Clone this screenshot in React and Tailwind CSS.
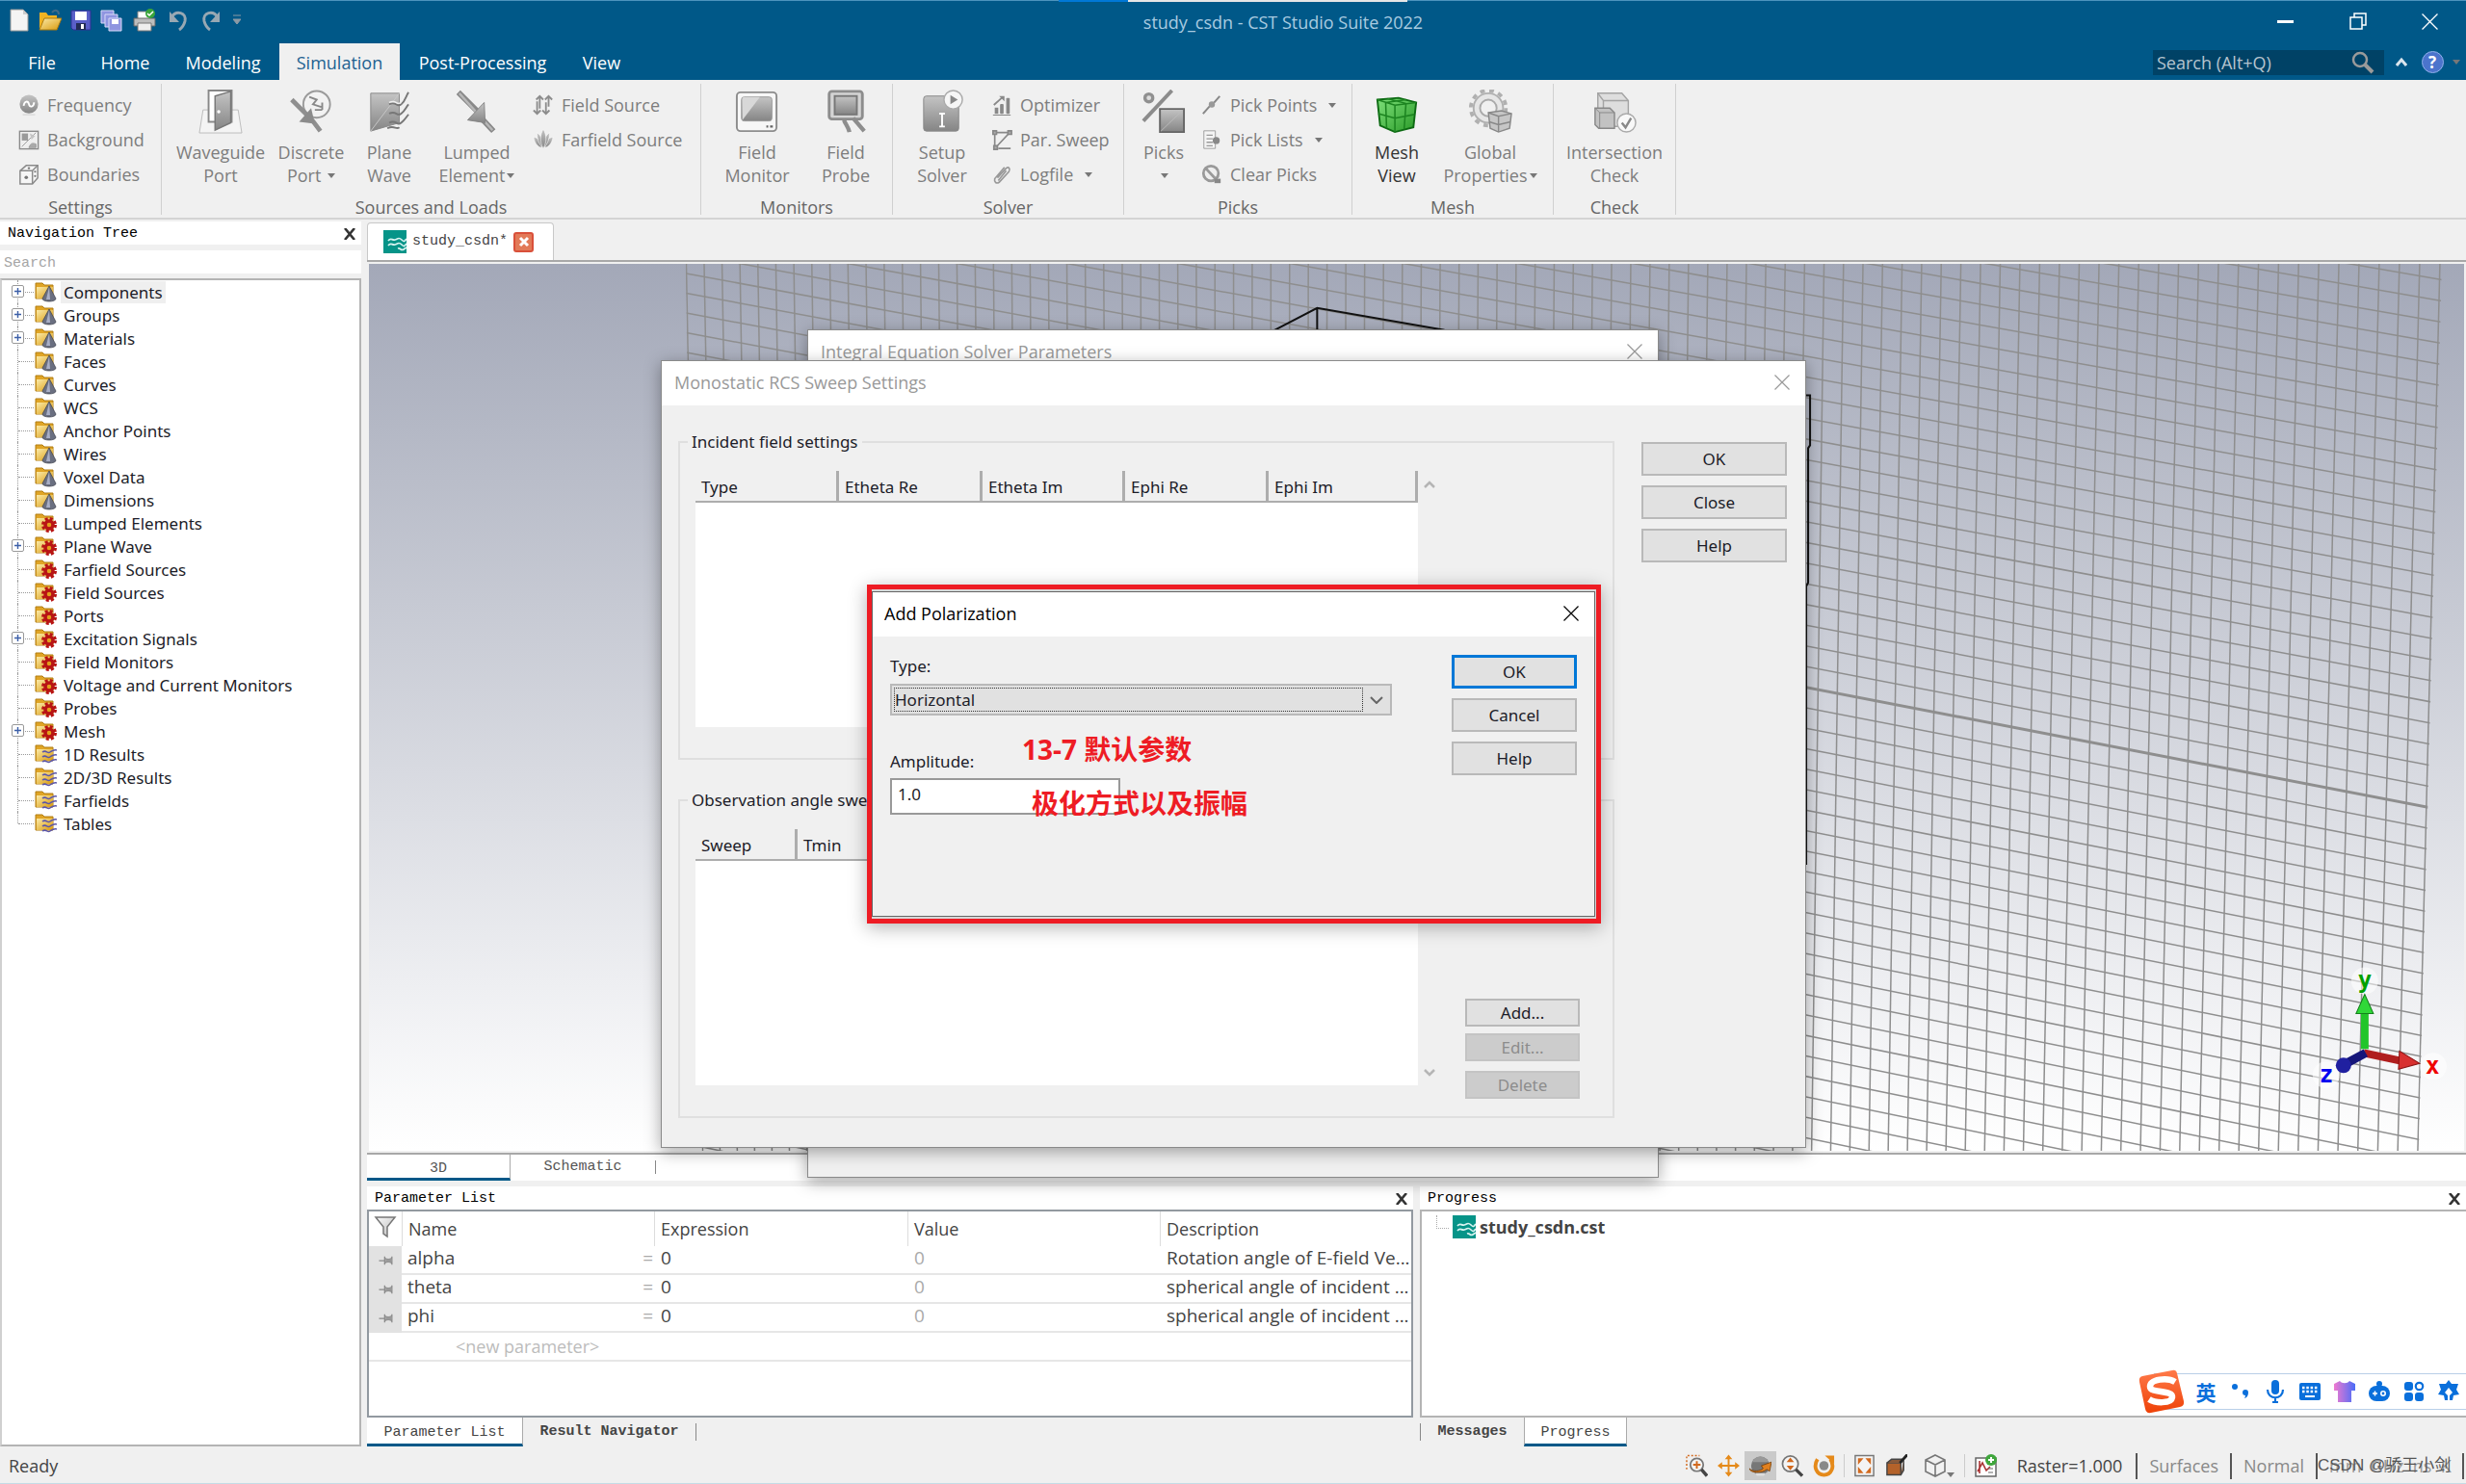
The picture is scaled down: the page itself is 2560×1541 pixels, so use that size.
import React from 'react'

const treeItems = [
  { name: 'Components', kind: 'cone', open: true, selected: true },
  { name: 'Groups', kind: 'cone', open: true },
  { name: 'Materials', kind: 'cone', open: true },
  { name: 'Faces', kind: 'cone' },
  { name: 'Curves', kind: 'cone' },
  { name: 'WCS', kind: 'cone' },
  { name: 'Anchor Points', kind: 'cone' },
  { name: 'Wires', kind: 'cone' },
  { name: 'Voxel Data', kind: 'cone' },
  { name: 'Dimensions', kind: 'cone' },
  { name: 'Lumped Elements', kind: 'gear' },
  { name: 'Plane Wave', kind: 'gear', open: true },
  { name: 'Farfield Sources', kind: 'gear' },
  { name: 'Field Sources', kind: 'gear' },
  { name: 'Ports', kind: 'gear' },
  { name: 'Excitation Signals', kind: 'gear', open: true },
  { name: 'Field Monitors', kind: 'gear' },
  { name: 'Voltage and Current Monitors', kind: 'gear' },
  { name: 'Probes', kind: 'gear' },
  { name: 'Mesh', kind: 'gear', open: true },
  { name: '1D Results', kind: 'wave' },
  { name: '2D/3D Results', kind: 'wave' },
  { name: 'Farfields', kind: 'wave' },
  { name: 'Tables', kind: 'wave' },
]

const params = [
  { name: 'alpha', expression: '0', value: '0', description: 'Rotation angle of E-field Ve...' },
  { name: 'theta', expression: '0', value: '0', description: 'spherical angle of incident ...' },
  { name: 'phi', expression: '0', value: '0', description: 'spherical angle of incident ...' },
]

/* shared gradients for the icons */
const Gradients = () => (
  <svg className="absolute w-0 h-0" aria-hidden="true">
    <defs>
      <linearGradient id="gray" x1="0" y1="0" x2="0" y2="1">
        <stop offset="0" stopColor="#c4c4c4" /><stop offset="1" stopColor="#858585" />
      </linearGradient>
      <linearGradient id="light" x1="0" y1="0" x2="1" y2="1">
        <stop offset="0" stopColor="#fafafa" /><stop offset="1" stopColor="#bcbcbc" />
      </linearGradient>
      <linearGradient id="folder" x1="0" y1="0" x2="1" y2="1">
        <stop offset="0" stopColor="#fbeaa8" /><stop offset="1" stopColor="#d99a0c" />
      </linearGradient>
      <linearGradient id="green" x1="0" y1="0" x2="1" y2="1">
        <stop offset="0" stopColor="#7ee07a" /><stop offset="1" stopColor="#2a9a28" />
      </linearGradient>
      <linearGradient id="sogou" x1="0" y1="0" x2="0" y2="1">
        <stop offset="0" stopColor="#ff7a4a" /><stop offset="1" stopColor="#ee4208" />
      </linearGradient>
      <linearGradient id="shirt" x1="0" y1="0" x2="1" y2="0">
        <stop offset="0" stopColor="#f07ad0" /><stop offset="1" stopColor="#4a6cf7" />
      </linearGradient>
    </defs>
  </svg>
)

const Caret = ({ className = '' }) => (
  <svg className={`inline-block w-2 h-[5px] ${className}`} viewBox="0 0 8 5"><path d="M0 0h8L4 5z" fill="#777" /></svg>
)

const WaveLogo = () => (
  <svg className="w-6 h-6 shrink-0" viewBox="0 0 24 24">
    <rect width="24" height="24" fill="#069488" />
    <path d="M5 11c3-4 4 0 7-1s4-3 7 0 3 1 5-1M5 16c3-4 4 0 7-1s4-3 7 0 3 1 5-1M15 19c3-1 3 3 6 1l3-2" fill="none" stroke="#d8f3f0" strokeWidth="1.700" />
  </svg>
)

const CloseX = ({ className = 'w-4 h-4' }) => (
  <svg className={className} viewBox="0 0 16 16"><path d="M.5.5l15 15M15.5.5l-15 15" stroke="currentColor" strokeWidth="1.200" fill="none" /></svg>
)

const PanelClose = () => (
  <button aria-label="Close panel" className="w-6 h-6 flex items-center justify-center text-[#333]">
    <svg className="w-3 h-3" viewBox="0 0 12 12"><path d="M1 0l10 12M11 0L1 12" stroke="currentColor" strokeWidth="2.600" /></svg>
  </button>
)

/* small 24px icons */
const smallIcons = {
  frequency: (
    <>
      <circle cx="12" cy="11" r="10.500" fill="url(#gray)" /><path d="M6 13c1-6 5-6 6-2s5 4 6-2" fill="none" stroke="#fff" strokeWidth="2" />
      <path d="M5 23h14" stroke="#ccc" />
    </>
  ),
  background: (
    <>
      <rect x="1.500" y="2.500" width="21" height="20" fill="#eee" stroke="#8a8a8a" strokeWidth="1.500" />
      <path d="M4 5h7v8H4z" fill="#9a9a9a" /><path d="M20 4L4 20M12 21c2-6 5-5 8-4v4z" stroke="#999" fill="#aaa" /><path d="M13 5l6 3-4 4z" fill="#c4c4c4" />
    </>
  ),
  boundaries: (
    <>
      <path d="M2 8l7-6h13v14l-6 7H2z" fill="#f6f6f6" stroke="#8a8a8a" strokeWidth="1.600" /><path d="M2 8h14v15M16 8l6-6" fill="none" stroke="#8a8a8a" strokeWidth="1.600" />
      <circle cx="9" cy="15.500" r="2" fill="#777" /><circle cx="12" cy="5" r="1.300" fill="#777" /><circle cx="19" cy="9" r="1.200" fill="#777" /><circle cx="19" cy="14" r="1.200" fill="#777" />
    </>
  ),
  fieldSource: (
    <g fill="none" stroke="#8c8c8c" strokeWidth="2">
      <path d="M8 16V2M4 6l4-4 4 4M18 14V2M14 6l4-4 4 4M5 8v14M1 18l4 4 4-4M15 9v13M11 18l4 4 4-4" />
    </g>
  ),
  farfield: (
    <g fill="url(#gray)" stroke="#fff" strokeWidth=".6">
      <path d="M1 9c6 1 9 6 9 12C5 20 2 15 1 9zM23 9c-6 1-9 6-9 12 5-1 8-6 9-12z" /><path d="M5 4c5 4 7 10 6 17-4-4-6-10-6-17zM19 4c-5 4-7 10-6 17 4-4 6-10 6-17z" /><path d="M12 0c4 7 4 15 0 22C8 15 8 7 12 0z" />
    </g>
  ),
  optimizer: (
    <g fill="#888">
      <rect x="4" y="15" width="4" height="7" /><rect x="10" y="11" width="4" height="11" rx="1" /><rect x="17" y="4" width="4" height="18" rx="1" /><path d="M3 12l9-8" stroke="#888" strokeWidth="2" /><path d="M9 2h6v6zM2 23h20v1H2z" />
    </g>
  ),
  sweep: (
    <g fill="none" stroke="#888" strokeWidth="1.800">
      <path d="M4 22V4h17L5 21M8 22h14" /><path d="M2 2h4v4H2zM19 2h4v4h-4zM3 19h4v4H3z" fill="#aaa" />
    </g>
  ),
  logfile: (
    <path d="M7 16L17 5c3-2 5 1 3 4L9 21c-3 2-6 0-5-4L15 4M8 19l9-11" fill="none" stroke="#999" strokeWidth="1.800" />
  ),
  pickPoints: (
    <>
      <path d="M2 22l8-9M14 10l7-8" stroke="#888" strokeWidth="2.200" /><circle cx="12" cy="11.500" r="3.500" fill="#999" />
    </>
  ),
  pickLists: (
    <>
      <path d="M3 2h13v20H3z" fill="#f4f4f4" stroke="#9a9a9a" /><path d="M6 7h7M6 11h7M6 15h7M6 19h7" stroke="#999" strokeWidth="1.500" /><circle cx="17" cy="13" r="4" fill="#888" />
    </>
  ),
  clearPicks: (
    <>
      <circle cx="11" cy="11" r="8.500" fill="#eee" stroke="#999" strokeWidth="3" /><path d="M5 5l12 13" stroke="#999" strokeWidth="3" /><path d="M15 17h7v5h-7z" fill="#888" />
    </>
  ),
}

const SmallButton = ({ icon, children, caret }) => (
  <button className="h-9 flex items-center gap-2 text-[#7d7d7d]">
    <svg className="w-[22px] h-6 shrink-0" viewBox="0 0 24 24">{smallIcons[icon]}</svg>
    <span>{children}</span>
    {caret && <Caret className="ml-1" />}
  </button>
)

/* large 48px ribbon icons */
const bigIcons = {
  waveguide: (
    <>
      <path d="M5 22h38l4 25H1z" fill="#f4f4f4" stroke="#bbb" /><path d="M11 1h25v34H11z" fill="#fff" stroke="#888" strokeWidth="2" />
      <path d="M18 7l17-5v34l-17 8z" fill="url(#gray)" stroke="#777" strokeWidth="1.500" /><circle cx="22" cy="24" r="1.800" fill="#fff" />
    </>
  ),
  discrete: (
    <>
      <circle cx="30" cy="16" r="14.500" fill="#f2f2f2" stroke="#9a9a9a" strokeWidth="2" /><path d="M22 8l8 3-4 5 9 3M36 22h-8M36 22v-8" fill="none" stroke="#888" strokeWidth="2" />
      <path d="M3 11l22 22M25 33l9 12" stroke="#8f8f8f" strokeWidth="5" /><path d="M24 20L11 35l17 2z" fill="#8b8b8b" />
    </>
  ),
  plane: (
    <>
      <path d="M4 4h31v32L4 45z" fill="url(#gray)" stroke="#888" /><path d="M4 45L35 4" stroke="#c8c8c8" />
      <path d="M24 16c8-4 8 4 13 0s5-9 8-13M24 26c8-4 8 4 13 0s5-7 8-10M24 36c8-4 8 4 13 0s5-6 8-9M22 42c8-4 9 2 13-1" fill="none" stroke="#777" strokeWidth="2" /><path d="M24 14c8-4 8 4 13 0" stroke="#eee" strokeWidth="1.500" fill="none" />
    </>
  ),
  lumped: (
    <>
      <path d="M4 3l24 24M28 30l14 15" stroke="#888" strokeWidth="6" /><path d="M5 4l36 40" stroke="#b8b8b8" strokeWidth="2.500" /><path d="M32 14L14 33l19 3z" fill="url(#gray)" stroke="#858585" />
    </>
  ),
  monitor: (
    <>
      <rect x="2" y="3" width="43" height="42" rx="4" fill="#f7f7f7" stroke="#8d8d8d" strokeWidth="2" /><rect x="7" y="8" width="33" height="26" rx="3" fill="url(#gray)" stroke="#999" />
      <path d="M8 33L27 8H10q-2 0-2 3z" fill="#d8d8d8" /><path d="M34 40h2M38 40h3" stroke="#666" strokeWidth="2.500" />
    </>
  ),
  probe: (
    <>
      <rect x="6" y="2" width="36" height="30" rx="3" fill="#d4d4d4" stroke="#8d8d8d" strokeWidth="3" /><rect x="12" y="7" width="24" height="20" fill="url(#gray)" stroke="#777" strokeWidth="2" />
      <path d="M22 33c2 5 5 8 6 13M32 31l12 14" stroke="#8d8d8d" strokeWidth="4.500" fill="none" />
    </>
  ),
  setup: (
    <>
      <rect x="4" y="7" width="38" height="38" rx="3" fill="url(#gray)" stroke="#888" /><path d="M24 26v14M21 26h6M21 40h6" stroke="#fff" strokeWidth="2" />
      <circle cx="36" cy="11" r="10" fill="#f6f6f6" stroke="#aaa" strokeWidth="1.500" /><path d="M33 6l8 5-8 5z" fill="#888" />
    </>
  ),
  picks: (
    <>
      <circle cx="8" cy="9" r="6" fill="#909090" /><circle cx="8" cy="9" r="2.500" fill="#ddd" /><path d="M33 1L2 34" stroke="#8c8c8c" strokeWidth="4" /><path d="M20 21h26v25H20z" fill="url(#gray)" stroke="#666" strokeWidth="2" /><path d="M21 45L45 22" stroke="#bbb" />
    </>
  ),
  mesh: (
    <>
      <path d="M3 11l23-2 19 5-3 27-20 5-16-7z" fill="url(#green)" stroke="#0c6a12" strokeWidth="2" /><path d="M3 11l19 6 23-3M22 17v29M12 14l1 28M34 15l-2 28M4 26l18 5 21-4M14 10l20 5M34 11L12 14" fill="none" stroke="#1c8420" strokeWidth="1.600" />
    </>
  ),
  global: (
    <>
      <circle cx="22" cy="20" r="16" fill="#e6e6e6" stroke="#b0b0b0" strokeWidth="2" /><circle cx="22" cy="20" r="19" fill="none" stroke="#b0b0b0" strokeWidth="4" strokeDasharray="5 5" /><circle cx="22" cy="20" r="9" fill="#f0f0f0" stroke="#aaa" strokeWidth="2" />
      <path d="M22 25l14-2 11 3-2 16-12 4-9-4z" fill="#c6c6c6" stroke="#888" strokeWidth="1.500" /><path d="M22 25l11 4 14-3M33 29v17M23 35l10 3 13-3" stroke="#888" fill="none" strokeWidth="1.500" />
    </>
  ),
  intersection: (
    <>
      <path d="M6 4h26l7 8v28H6z" fill="#dedede" stroke="#a4a4a4" strokeWidth="1.500" /><path d="M6 4l6 8h27M12 12v10" stroke="#a4a4a4" fill="none" strokeWidth="1.500" />
      <path d="M3 20h16l5 5v17H7l-4-4z" fill="#c2c2c2" stroke="#888" strokeWidth="1.500" /><path d="M3 20l5 5h16M8 25v17" stroke="#888" fill="none" /><circle cx="37" cy="36" r="10" fill="#f8f8f8" stroke="#aaa" strokeWidth="1.500" /><path d="M32 36l4 5 6-10" fill="none" stroke="#888" strokeWidth="2.500" />
    </>
  ),
}

const BigButton = ({ icon, lines, caret, className = '' }) => (
  <button className={`h-[108px] flex flex-col items-center pt-1 leading-6 ${className}`}>
    <svg className="w-[46px] h-[46px] mb-[7px] shrink-0" viewBox="0 0 48 48">{bigIcons[icon]}</svg>
    <span className="whitespace-nowrap">{lines[0]}</span>
    <span className="whitespace-nowrap">{lines[1]}{caret && <Caret className="ml-0.5 mb-1" />}</span>
  </button>
)

const Group = ({ title, className = '', children }) => (
  <div className={`shrink-0 h-[136px] mt-1 flex flex-col border-r border-[#d0d0d0] ${className}`}>
    <div className="flex h-[116px] shrink-0 pt-0.5">{children}</div>
    <div className="text-center leading-6 text-[#666]">{title}</div>
  </div>
)

const TitleBar = () => (
  <header className="h-[45px] shrink-0 flex bg-[#005888] border-t border-[#4c94be] text-[#a9cbe0]">
    <div className="w-[329px] h-10 flex items-center gap-2 pl-2">
      <svg className="w-6 h-6" viewBox="0 0 24 24"><path d="M3 1h13l5 5v17H3z" fill="#f4f4f4" stroke="#999" /><path d="M16 1v5h5" fill="#ccc" /></svg>
      <svg className="w-6 h-6" viewBox="0 0 24 24"><path d="M1 22V4h7l2 3h9v4" fill="#f0b323" /><path d="M1 22L6 10h18l-5 12z" fill="url(#folder)" stroke="#a97a10" /><path d="M14 4c3-4 7-2 7 2" fill="none" stroke="#3f6a8a" strokeWidth="2" /></svg>
      <svg className="w-6 h-6" viewBox="0 0 24 24"><path d="M2 2h20v20H4l-2-2z" fill="#5a5fc8" stroke="#2c3092" /><rect x="6" y="3" width="12" height="9" fill="#fff" /><rect x="7" y="15" width="10" height="7" fill="#222b55" /><rect x="12" y="16" width="3" height="5" fill="#fff" /></svg>
      <svg className="w-6 h-6" viewBox="0 0 24 24"><g fill="#8f95e0" stroke="#d8daf7"><path d="M1 2h13v13H1z" /><path d="M5 6h13v13H5z" /><path d="M9 10h13v13H9z" /></g><path d="M12 11h7v5h-7z" fill="#fff" /></svg>
      <svg className="w-6 h-6 ml-0.5" viewBox="0 0 24 24"><path d="M5 3h13v8H5z" fill="#fff" stroke="#888" /><path d="M1 10h22v8H1z" fill="#bdbdbd" stroke="#666" /><path d="M5 15h14v8H5z" fill="#eee" stroke="#777" /><circle cx="18" cy="5" r="5" fill="#3aa53a" /><path d="M15 5l2 2 4-4" stroke="#fff" strokeWidth="1.500" fill="none" /></svg>
      <svg className="w-6 h-6 ml-1" viewBox="0 0 24 24"><path d="M4 9C9 1 20 4 18 13c-1 4-3 7-6 9" fill="none" stroke="#98a8b3" strokeWidth="3" /><path d="M2 3v11h10z" fill="#98a8b3" /></svg>
      <svg className="w-6 h-6" viewBox="0 0 24 24"><path d="M20 9C15 1 4 4 6 13c1 4 3 7 6 9" fill="none" stroke="#98a8b3" strokeWidth="3" /><path d="M22 3v11H12z" fill="#98a8b3" /></svg>
      <svg className="w-2 h-3 ml-1" viewBox="0 0 8 12"><path d="M0 1h8M0 5h8L4 10z" stroke="#8c9aa5" fill="#8c9aa5" /></svg>
    </div>
    <h1 className="flex-1 text-center text-[18px] leading-[44px]">study_csdn - CST Studio Suite 2022</h1>
    <div className="h-[42px] flex text-white">
      <button aria-label="Minimize" className="w-[75px] flex items-center justify-center"><span className="w-[17px] h-[3px] bg-white" /></button>
      <button aria-label="Restore" className="w-[75px] flex items-center justify-center">
        <svg className="w-[18px] h-[18px]" viewBox="0 0 18 18" fill="none" stroke="#fff" strokeWidth="1.500"><path d="M1 5h12v12H1zM5 5V1h12v12h-4" /></svg>
      </button>
      <button aria-label="Close" className="w-[75px] flex items-center justify-center"><CloseX className="w-[17px] h-[17px]" /></button>
    </div>
  </header>
)

const MenuTabs = () => (
  <nav className="h-[38px] shrink-0 flex bg-[#005888] text-white text-[18px]">
    <button className="w-[87px] pt-0.5">File</button>
    <button className="w-[86px] pt-0.5">Home</button>
    <button className="w-[117px] pt-0.5">Modeling</button>
    <button className="w-[125px] pt-0.5 bg-[#f0f0f0] text-[#1d6291]">Simulation</button>
    <button className="w-[172px] pt-0.5">Post-Processing</button>
    <button className="w-[75px] pt-0.5">View</button>
    <div className="ml-auto mt-[7px] h-[26px] w-60 flex items-center bg-[#004266] pl-1 pr-2.5">
      <input aria-label="Search commands" placeholder="Search (Alt+Q)" className="flex-1 min-w-0 bg-transparent outline-none text-[18px] placeholder:text-[#b5c4cf]" />
      <svg className="w-6 h-6" viewBox="0 0 24 24"><circle cx="9" cy="9" r="7" fill="none" stroke="#9a9a9a" strokeWidth="2.500" /><path d="M14 14l8 8" stroke="#9a9a9a" strokeWidth="4" /></svg>
    </div>
    <button aria-label="Collapse ribbon" className="w-9 flex items-center justify-center">
      <svg className="w-3 h-3" viewBox="0 0 12 12"><path d="M1 10l5-6 5 6" fill="none" stroke="#dbe6ee" strokeWidth="3" /></svg>
    </button>
    <button aria-label="Help" className="w-7 flex items-center justify-center">
      <span className="w-[23px] h-[23px] rounded-full bg-[#4b74cc] border border-[#8fb0ea] font-bold leading-[21px] text-[17px]">?</span>
    </button>
    <span className="w-[21px] flex items-center justify-center"><Caret /></span>
  </nav>
)

const Ribbon = () => (
  <div className="h-[145px] shrink-0 flex border-b-2 border-[#d4d4d4] text-[18px] text-[#7d7d7d]">
    <Group title="Settings" className="w-[168px]">
      <div className="pl-[19px] pt-0.5">
        <SmallButton icon="frequency">Frequency</SmallButton>
        <SmallButton icon="background">Background</SmallButton>
        <SmallButton icon="boundaries">Boundaries</SmallButton>
      </div>
    </Group>
    <Group title="Sources and Loads" className="w-[560px]">
      <BigButton icon="waveguide" lines={['Waveguide', 'Port']} className="w-[110px] ml-1.5" />
      <BigButton icon="discrete" lines={['Discrete', 'Port ']} caret className="w-[78px]" />
      <BigButton icon="plane" lines={['Plane', 'Wave']} className="w-[84px]" />
      <BigButton icon="lumped" lines={['Lumped', 'Element']} caret className="w-[98px]" />
      <div className="pl-[9px] pt-0.5">
        <SmallButton icon="fieldSource">Field Source</SmallButton>
        <SmallButton icon="farfield">Farfield Source</SmallButton>
      </div>
    </Group>
    <Group title="Monitors" className="w-[199px]">
      <BigButton icon="monitor" lines={['Field', 'Monitor']} className="w-[92px] ml-3" />
      <BigButton icon="probe" lines={['Field', 'Probe']} className="w-[92px]" />
    </Group>
    <Group title="Solver" className="w-[240px]">
      <BigButton icon="setup" lines={['Setup', 'Solver']} className="w-[86px] ml-2" />
      <div className="pl-2 pt-0.5">
        <SmallButton icon="optimizer">Optimizer</SmallButton>
        <SmallButton icon="sweep">Par. Sweep</SmallButton>
        <SmallButton icon="logfile" caret>Logfile</SmallButton>
      </div>
    </Group>
    <Group title="Picks" className="w-[237px]">
      <BigButton icon="picks" lines={['Picks', '']} caret className="w-[76px] ml-[3px]" />
      <div className="pl-px pt-0.5">
        <SmallButton icon="pickPoints" caret>Pick Points</SmallButton>
        <SmallButton icon="pickLists" caret>Pick Lists</SmallButton>
        <SmallButton icon="clearPicks">Clear Picks</SmallButton>
      </div>
    </Group>
    <Group title="Mesh" className="w-[209px]">
      <BigButton icon="mesh" lines={['Mesh', 'View']} className="w-[80px] ml-1.5 text-[#333]" />
      <BigButton icon="global" lines={['Global', 'Properties']} caret className="w-[114px]" />
    </Group>
    <Group title="Check" className="w-[127px]">
      <BigButton icon="intersection" lines={['Intersection', 'Check']} className="w-full" />
    </Group>
  </div>
)

const FolderIcon = ({ kind }) => (
  <svg className="w-[23px] h-[22px] shrink-0" viewBox="0 0 23 22">
    <path d="M1 18V2h7l2 2h9v14z" fill="#e0a526" stroke="#b07c12" />
    <path d="M2 6h17v12H2z" fill="url(#folder)" />
    {kind === 'cone' && <path d="M15 5l-7 13c0 4 14 4 14 0z" fill="#6a6f80" stroke="#3c3f4a" strokeWidth=".7" />}
    {kind === 'cone' && <path d="M15 6l-3 13h4z" fill="#a9afc6" />}
    {kind === 'gear' && (
      <>
        <circle cx="15" cy="13" r="6.500" fill="none" stroke="#b81414" strokeWidth="3" strokeDasharray="3 2.100" /><circle cx="15" cy="13" r="4" fill="#e2a01c" stroke="#b81414" strokeWidth="3.500" />
      </>
    )}
    {kind === 'wave' && <path d="M8 9c4-3 5 2 8 0s4-3 7-2M8 14c4-3 5 2 8 0s4-3 7-2M8 19c4-3 5 2 8 0s4-3 7-2" fill="none" stroke="#5b56a8" strokeWidth="1.500" />}
  </svg>
)

const NavigationTree = () => (
  <aside className="w-[375px] mr-1.5 shrink-0 flex flex-col pt-0.5">
    <div className="h-6 pt-0.5 pl-2 flex items-center justify-between bg-white font-['Liberation_Mono',monospace] text-[15px] text-black">
      Navigation Tree
      <PanelClose />
    </div>
    <input aria-label="Search tree" placeholder="Search" className="mt-1.5 h-6 pt-0.5 pl-1 bg-white outline-none font-['Liberation_Mono',monospace] text-[15px] placeholder:text-[#a6a6a6]" />
    <ul className="mt-[5px] flex-1 bg-white border-2 border-[#b4b4b4] border-l-[#d0d0d0] font-['Noto_Sans',sans-serif] text-[17px] text-[#1c1c28]">
      {treeItems.map((item, i) => (
        <li key={item.name} className="h-6 flex items-center">
          <span className={`relative ml-4 w-[18px] shrink-0 border-l border-dotted border-[#999] ${i === treeItems.length - 1 ? 'h-3 self-start' : 'h-6'}`}>
            <span className={`absolute left-0 w-4 border-t border-dotted border-[#999] ${i === treeItems.length - 1 ? 'top-full' : 'top-1/2'}`} />
            {item.open && (
              <button aria-label={`Expand ${item.name}`} className="absolute -left-[7px] top-[5px] w-[13px] h-[13px] bg-white border border-[#999] rounded-[2px]">
                <svg className="w-[11px] h-[11px]" viewBox="0 0 11 11"><path d="M2 5.500h7M5.500 2v7" stroke="#3c5fa8" strokeWidth="1.400" /></svg>
              </button>
            )}
          </span>
          <FolderIcon kind={item.kind} />
          <span className={`ml-1 px-[3px] leading-[23px] ${item.selected ? 'bg-[#efefef]' : ''}`}>{item.name}</span>
        </li>
      ))}
    </ul>
  </aside>
)

const Viewport = () => {
  // grid plane seen in perspective: 92 columns, rows counted from the bold axis
  const cols = Array.from({ length: 93 }, (_, i) => ({
    top: 714 + 18.5 * i + 0.01370 * i * i,
    bottom: 731 + 17.9 * i + 0.01550 * i * i,
  }))
  const rows = Array.from({ length: 80 }, (_, i) => i - 44)
  return (
    <svg className="absolute inset-0 w-full h-full" viewBox="385 274 2172 924" preserveAspectRatio="none">
      <defs>
        <linearGradient id="sky" x1="0" y1="0" x2="0" y2="1">
          <stop offset="0" stopColor="#a3a8b8" /><stop offset="1" stopColor="#ffffff" />
        </linearGradient>
        <clipPath id="plane"><path d="M713 274H2534L2510 1198H730z" /></clipPath>
      </defs>
      <rect x="385" y="274" width="2172" height="924" fill="url(#sky)" />
      <g stroke="#8e8e8e" strokeWidth="1.500" clipPath="url(#plane)">
        {cols.map((c, i) => <line key={i} x1={c.top} y1="274" x2={c.bottom} y2="1198" />)}
        {rows.map((k) => (
          <line key={k} x1="714" y1={490 + 20.6 * k} x2="2534" y2={843 + (k < 0 ? 22.1 : 21.75) * k} strokeWidth={k === 0 ? 3 : 1.5} />
        ))}
      </g>
      <path d="M1318 346L1368 320L1500 343M1368 320V346M1872 411h7v52l-2 3v140l-2 4v290" fill="none" stroke="#111" strokeWidth="2" />
      {/* axis tripod */}
      <g fill="#fff" fillOpacity=".55"><circle cx="2454" cy="1021" r="14" /><circle cx="2525" cy="1110" r="14" /><circle cx="2414" cy="1119" r="14" /></g>
      <path d="M2453 1096l42 9" stroke="#b01e1e" strokeWidth="8" /><path d="M2490 1094l21 13-22 6z" fill="#d83030" stroke="#8a1212" />
      <path d="M2454 1092v-38" stroke="#22c52a" strokeWidth="8" /><path d="M2454 1035l9 20h-18z" fill="#30d838" stroke="#12801a" />
      <path d="M2455 1096l-22 12" stroke="#16167a" strokeWidth="9" /><circle cx="2432" cy="1109" r="8" fill="#2020a0" />
      <g fontFamily="DejaVu Sans Mono, monospace" fontWeight="bold" fontSize="24">
        <text x="2447" y="1028" fill="#00a000">y</text>
        <text x="2517" y="1118" fill="#f00000">x</text>
        <text x="2407" y="1127" fill="#0000f0">z</text>
      </g>
    </svg>
  )
}

const ParameterPanel = () => (
  <section className="min-w-0 flex flex-col">
    <div className="h-6 pt-0.5 shrink-0 pl-2 flex items-center justify-between bg-white font-['Liberation_Mono',monospace] text-[15px] text-black">
      Parameter List
      <PanelClose />
    </div>
    <div className="flex-1 bg-white border-2 border-[#9299a0] text-[19px] text-[#444]">
      <table className="w-full table-fixed border-separate border-spacing-0">
        <colgroup>
          <col className="w-[34px]" /><col className="w-[263px]" /><col className="w-[263px]" /><col className="w-[262px]" /><col />
        </colgroup>
        <thead>
          <tr className="h-9 text-left text-[18px]">
            <th className="font-normal">
              <svg className="w-6 h-6 mx-auto -mt-1" viewBox="0 0 24 24"><path d="M2 2h20l-8 10v10l-4-3v-7z" fill="url(#light)" stroke="#777" strokeWidth="1.500" /></svg>
            </th>
            <th className="font-normal px-1.5 border-x border-[#ddd]">Name</th>
            <th className="font-normal px-1.5 border-r border-[#ddd]">Expression</th>
            <th className="font-normal px-1.5 border-r border-[#ddd]">Value</th>
            <th className="font-normal px-1.5">Description</th>
          </tr>
        </thead>
        <tbody>
          {params.map((p) => (
            <tr key={p.name} className="leading-6 align-top">
              <td className="h-[30px] bg-[#e2e2e2] align-middle">
                <svg className="w-4 h-2.5 ml-2.5" viewBox="0 0 18 12"><path d="M0 6h7M7 1v10M16 1v10M7 3c3 2 6 2 9 0M7 9c3-2 6-2 9 0" stroke="#888" strokeWidth="1.500" fill="none" /><path d="M8 4h8v4H8z" fill="#999" /></svg>
              </td>
              <td className="px-1.5 border-b-2 border-[#e6e6e6]"><span className="flex justify-between">{p.name}<span className="text-[#aaa] -mr-1">=</span></span></td>
              <td className="px-1.5 border-b-2 border-[#e6e6e6]">{p.expression}</td>
              <td className="px-1.5 border-b-2 border-[#e6e6e6] text-[#aaa]">{p.value}</td>
              <td className="px-1.5 border-b-2 border-[#e6e6e6] whitespace-nowrap overflow-hidden">{p.description}</td>
            </tr>
          ))}
          <tr className="leading-6">
            <td className="h-[30px] border-b-2 border-[#e6e6e6]" />
            <td colSpan="4" className="pl-14 text-[18px] border-b-2 border-[#e6e6e6] text-[#bcbcbc]">&lt;new parameter&gt;</td>
          </tr>
        </tbody>
      </table>
    </div>
    <div className="h-[30px] shrink-0 flex items-start font-['Liberation_Mono',monospace] text-[15px] text-[#444]">
      <button className="h-[30px] pt-[5px] w-[162px] bg-white border-r border-[#aaa] border-b-3 border-b-[#005888]">Parameter List</button>
      <button className="h-[30px] w-[179px] font-bold text-[#444]">Result Navigator</button>
      <span className="mt-1.5 h-[18px] border-l border-[#888]" />
    </div>
  </section>
)

const ProgressPanel = () => (
  <section className="min-w-0 flex flex-col">
    <div className="h-6 pt-0.5 shrink-0 pl-2 flex items-center justify-between bg-white font-['Liberation_Mono',monospace] text-[15px] text-black">
      Progress
      <PanelClose />
    </div>
    <div className="flex-1 bg-white border-2 border-r-0 border-[#b4b4b4] flex items-start pl-[15px] pt-1">
      <span className="w-[13px] h-3.5 mr-1 border-l border-b border-dotted border-[#aaa]" />
      <WaveLogo />
      <span className="ml-1 font-bold text-[18px] leading-[25px] text-[#444]">study_csdn.cst</span>
    </div>
    <div className="h-[30px] shrink-0 flex items-start font-['Liberation_Mono',monospace] text-[15px] text-[#444]">
      <span className="mt-1.5 h-[18px] border-l border-[#888]" />
      <button className="h-[30px] w-[107px] font-bold">Messages</button>
      <button className="h-[30px] pt-[5px] w-[107px] bg-white border-x border-[#aaa] border-b-3 border-b-[#005888]">Progress</button>
    </div>
  </section>
)

const Workspace = () => (
  <main className="flex-1 min-w-0 flex flex-col">
    <div className="h-[42px] shrink-0 flex items-end">
      <div className="h-[39px] w-[194px] flex items-center gap-1.5 pl-4 bg-white border border-b-0 border-[#c8c8c8] rounded-t text-[15px] text-[#444] font-['Liberation_Mono',monospace]">
        <WaveLogo />
        study_csdn*
        <button aria-label="Close document" className="w-[21px] h-[21px] rounded-[3px] bg-[#e27a58] border-2 border-[#d9503a] text-white flex items-center justify-center">
          <svg className="w-3 h-3" viewBox="0 0 12 12"><path d="M2 2l8 8M10 2l-8 8" stroke="#fff" strokeWidth="3" /></svg>
        </button>
      </div>
    </div>
    <div className="flex-1 border-t-2 border-b-2 border-[#a8a8a8] bg-[#f0f0f0] p-0.5">
      <div className="relative w-full h-full"><Viewport /></div>
    </div>
    <div className="h-[27px] shrink-0 flex items-start bg-white font-['Liberation_Mono',monospace] text-[15px] text-[#555]">
      <button className="h-[27px] pt-1 w-[149px] border-r border-[#aaa] border-b-3 border-b-[#005888] bg-white">3D</button>
      <button className="h-[27px] w-[150px]">Schematic</button>
      <span className="mt-1.5 h-3.5 border-l border-[#888]" />
    </div>
    <div className="mt-1.5 h-[270px] shrink-0 grid grid-cols-2 gap-[7px]">
      <ParameterPanel />
      <ProgressPanel />
    </div>
  </main>
)

const statusIcons = [
  <><path d="M1 16V1h14" fill="none" stroke="#d2691e" strokeWidth="1.500" strokeDasharray="2 2" /><circle cx="12" cy="11" r="7" fill="#f4f4f4" stroke="#777" strokeWidth="1.800" /><path d="M8 11h8M12 7v8" stroke="#d2691e" strokeWidth="2" /><path d="M17 16l6 7" stroke="#444" strokeWidth="3.500" /></>,
  <path d="M12 0l4 5h-3v6h6V8l5 4-5 4v-3h-6v6h3l-4 5-4-5h3v-6H5v3l-5-4 5-4v3h6V5H8z" fill="#e58a1a" />,
  <><circle cx="12" cy="12" r="10" fill="#777" /><path d="M3 8c4-8 14-8 18 0" fill="#999" /><path d="M0 15c4 4 12 3 15 0l-2-3 11-4-2 10-3-2c-6 5-18 4-19-1z" fill="#e08020" stroke="#6e3a08" strokeWidth=".8" /><path d="M7 20h10l-1 3H8z" fill="#ddd" /></>,
  <><circle cx="10" cy="10" r="8.500" fill="#f4f4f4" stroke="#777" strokeWidth="1.800" /><path d="M10 3l4 5H6zM10 17l4-5H6z" fill="#d2691e" /><path d="M16 16l7 7" stroke="#444" strokeWidth="3.500" /></>,
  <><circle cx="12" cy="12" r="5" fill="#888" /><path d="M5 5C0 13 4 22 12 22S24 13 19 5" fill="none" stroke="#e58a1a" strokeWidth="4" /><path d="M13 1h10v9z" fill="#e58a1a" /></>,
  null,
  <><path d="M2 1h20v22H2z" fill="#f4f4f4" stroke="#777" strokeWidth="1.500" /><path d="M5 4h6L5 11zM19 4v7l-6-7zM5 20v-7l6 7zM19 20h-6l6-7z" fill="#d2691e" /></>,
  <><path d="M2 9h15v13H2z" fill="#b4622a" stroke="#444" strokeWidth="1.500" /><path d="M2 9l5-4h12l-2 4M17 22l3-5V6" fill="#8a5a3a" stroke="#444" strokeWidth="1.500" /><path d="M16 9l8-9" stroke="#222" strokeWidth="3" /></>,
]

const StatusBar = () => (
  <footer className="h-[39px] shrink-0 flex items-center pt-0.5 pl-[9px] pr-0.5 border-b border-[#c5dbe6] text-[18px] text-[#444]">
    <span>Ready</span>
    <div className="ml-auto flex items-center">
      {statusIcons.map((icon, i) => icon ? (
        <button key={i} aria-label={`View tool ${i + 1}`} className={`w-[33px] h-[30px] flex items-center justify-center ${i === 2 ? 'bg-[#cacaca]' : ''}`}>
          <svg className="w-[23px] h-6" viewBox="0 0 24 24">{icon}</svg>
        </button>
      ) : <span key={i} className="h-6 mx-1 border-l border-[#ccc]" />)}
      <button aria-label="View cube" className="ml-3 flex items-end">
        <svg className="w-6 h-6" viewBox="0 0 24 24"><path d="M12 1l10 5v12l-10 5-10-5V6zM2 6l10 5 10-5M12 11v12" fill="#f2f2f2" stroke="#777" strokeWidth="1.600" /></svg>
        <Caret />
      </button>
      <span className="h-6 mx-2.5 border-l border-[#ccc]" />
      <svg className="w-6 h-6" viewBox="0 0 24 24"><path d="M1 4h21v19H1z" fill="#fff" stroke="#666" strokeWidth="1.500" /><path d="M5 7v13M3 18l5-9 4 8 4-4" fill="none" stroke="#a33" strokeWidth="1.600" /><path d="M14 15h5M14 19h5" stroke="#666" /><circle cx="17" cy="6" r="6" fill="#3fa63c" /><path d="M14 6h6M17 3v6" stroke="#fff" strokeWidth="2" /></svg>
      <span className="ml-5 pr-3.5 border-r-2 border-[#555]">Raster=1.000</span>
      <span className="px-3 border-r-2 border-[#555] text-[#888]">Surfaces</span>
      <span className="px-3 border-r-2 border-[#555] text-[#888]">Normal</span>
      <span className="relative w-[152px] pl-3 border-r-2 border-[#555] text-[#999] whitespace-pre">
        mm  GHz  ns  K
        <span className="absolute left-0 top-0 text-[17px] text-[#555] font-['Liberation_Sans','Noto_Sans_CJK_SC',sans-serif]">CSDN @骄王小剑</span>
      </span>
    </div>
  </footer>
)

const ImeBar = () => (
  <div className="absolute right-0 bottom-[73px] h-[46px] flex items-center font-['Noto_Sans_CJK_SC',sans-serif]">
    <svg className="w-12 h-[46px] z-10 -mr-8" viewBox="0 0 48 46"><path d="M4 7L35 1q4-1 5 3l7 29q1 5-4 6l-30 6q-5 1-6-4L1 13q-1-5 3-6z" fill="url(#sogou)" /><path d="M38 13C30 8 12 10 12 18c0 7 24 3 23 11-1 7-18 6-24 2" fill="none" stroke="#fff" strokeWidth="6.500" /></svg>
    <div className="h-[38px] flex items-center pl-[35px] bg-white border border-r-0 border-[#b9cfe8] text-[#0a6fdb]">
      <button className="w-9 text-[21px] font-bold leading-none">英</button>
      <button aria-label="Punctuation" className="w-9 flex justify-center"><svg className="w-5 h-5" viewBox="0 0 20 20"><circle cx="4" cy="5" r="3" fill="#0a6fdb" /><path d="M12 11a3 3 0 016 0q0 5-4 6 1-2 1-3-3 0-3-3z" fill="#0a6fdb" /></svg></button>
      <button aria-label="Voice" className="w-9 flex justify-center"><svg className="w-6 h-6" viewBox="0 0 24 24"><rect x="8" y="0" width="8" height="15" rx="4" fill="#0a6fdb" /><path d="M4 10c0 11 16 11 16 0M12 18v5M9 23h6" fill="none" stroke="#0a6fdb" strokeWidth="2.200" /></svg></button>
      <button aria-label="Keyboard" className="w-9 flex justify-center"><svg className="w-6 h-6" viewBox="0 0 24 24"><rect x="1" y="3" width="22" height="18" rx="2" fill="#0a6fdb" /><path d="M4 8h16M4 12h16" stroke="#fff" strokeWidth="2.400" strokeDasharray="2.500 1.800" /><path d="M7 17h10" stroke="#fff" strokeWidth="2" /></svg></button>
      <button aria-label="Skin" className="w-9 flex justify-center"><svg className="w-6 h-6" viewBox="0 0 24 24"><path d="M7 1c2 3 8 3 10 0l6 3v7h-4v12H5V11H1V4z" fill="url(#shirt)" /></svg></button>
      <button aria-label="Assistant" className="w-9 flex justify-center"><svg className="w-6 h-6" viewBox="0 0 24 24"><rect x="1" y="6" width="22" height="16" rx="8" fill="#0a6fdb" /><circle cx="12" cy="4" r="3" fill="#0a6fdb" /><path d="M5 14h5M7.500 11.500v5" stroke="#fff" strokeWidth="1.600" /><circle cx="16" cy="14" r="2.200" fill="none" stroke="#fff" strokeWidth="1.600" /></svg></button>
      <button aria-label="Tools" className="w-9 flex justify-center"><svg className="w-6 h-6" viewBox="0 0 24 24" fill="#0a6fdb"><rect x="2" y="2" width="9" height="9" rx="3" /><circle cx="17.500" cy="6.500" r="3.700" fill="none" stroke="#0a6fdb" strokeWidth="2.200" /><rect x="2" y="13" width="9" height="9" rx="3" /><rect x="13" y="13" width="9" height="9" rx="3" /></svg></button>
      <button aria-label="Settings" className="w-9 flex justify-center"><svg className="w-6 h-6" viewBox="0 0 24 24"><path d="M12 0l3 4h7l-2 6 3 5-6 1-1 5h-8l-1-5-6-1 3-5-2-6h7z" fill="#0a6fdb" /><path d="M12 8l4 5-3 3v7h-2v-7l-3-3z" fill="#fff" /></svg></button>
    </div>
  </div>
)

const DialogButton = ({ primary, className = '', ...props }) => (
  <button
    className={`bg-[#e1e1e1] text-[#1c1c28] disabled:bg-[#cccccc] disabled:border-[#c4c4c4] disabled:text-[#8c8c8c] ${primary ? 'border-3 border-[#0078d7]' : 'border-2 border-[#b9b9b9]'} ${className}`}
    {...props}
  />
)

const DialogTitle = ({ children, className = 'pl-[13px] pr-4 text-[#999]' }) => (
  <div className={`h-[46px] pb-0.5 flex items-center justify-between bg-white font-['Open_Sans',sans-serif] text-[18px] ${className}`}>
    <h2>{children}</h2>
    <button aria-label="Close dialog"><CloseX /></button>
  </div>
)

const HeadCell = ({ children }) => (
  <th className="h-[33px] pt-0.5 px-1.5 text-left font-normal bg-[#f0f0f0] border-r-3 border-b-2 border-[#adadad] whitespace-nowrap">{children}</th>
)

const RcsDialog = () => (
  <div role="dialog" className="absolute left-[686px] top-[374px] w-[1189px] h-[818px] bg-[#f0f0f0] border border-[#8a8a8a] shadow-[0_4px_16px_rgba(0,0,0,0.35)] font-['Noto_Sans',sans-serif] text-[17px] text-[#1c1c28]">
    <DialogTitle>Monostatic RCS Sweep Settings</DialogTitle>
    <div className="flex items-start pl-[17px] pr-[19px] pt-[26px]">
      <div className="flex-1">
        <fieldset className="h-[342px] border-2 border-[#dfdfdf] pl-4">
          <legend className="-ml-2 px-1 leading-6">Incident field settings</legend>
          <div className="mt-[18px] flex">
            <div className="w-[750px] h-[266px] bg-white">
              <table className="w-full table-fixed border-separate border-spacing-0">
                <colgroup><col className="w-[149px]" /><col className="w-[149px]" /><col className="w-[148px]" /><col className="w-[149px]" /><col /></colgroup>
                <thead>
                  <tr><HeadCell>Type</HeadCell><HeadCell>Etheta Re</HeadCell><HeadCell>Etheta Im</HeadCell><HeadCell>Ephi Re</HeadCell><HeadCell>Ephi Im</HeadCell></tr>
                </thead>
              </table>
            </div>
            <svg className="mt-2.5 ml-1.5 w-3 h-2" viewBox="0 0 12 8"><path d="M1 7l5-5 5 5" fill="none" stroke="#b5b5b5" strokeWidth="2.500" /></svg>
          </div>
        </fieldset>
        <fieldset className="mt-[30px] h-[342px] border-2 border-[#dfdfdf] pl-4">
          <legend className="-ml-2 px-1 leading-6">Observation angle sweep settings</legend>
          <div className="mt-[18px] flex items-start">
            <div className="w-[750px] h-[266px] bg-white">
              <table className="w-full table-fixed border-separate border-spacing-0">
                <colgroup><col className="w-[106px]" /><col className="w-[106px]" /><col className="w-[106px]" /><col /></colgroup>
                <thead>
                  <tr><HeadCell>Sweep</HeadCell><HeadCell>Tmin</HeadCell><HeadCell>Tmax</HeadCell><HeadCell>Step</HeadCell></tr>
                </thead>
              </table>
            </div>
            <svg className="mt-[249px] ml-1.5 w-3 h-2" viewBox="0 0 12 8"><path d="M1 1l5 5 5-5" fill="none" stroke="#b5b5b5" strokeWidth="2.500" /></svg>
            <div className="ml-[31px] mt-44 flex flex-col">
              <DialogButton className="w-[119px] h-[29px] leading-6">Add...</DialogButton>
              <DialogButton disabled className="w-[119px] h-[29px] mt-[7px] leading-6">Edit...</DialogButton>
              <DialogButton disabled className="w-[119px] h-[29px] mt-2.5 leading-6">Delete</DialogButton>
            </div>
          </div>
        </fieldset>
      </div>
      <div className="ml-7 mt-3 flex flex-col gap-2.5">
        <DialogButton className="w-[151px] h-[35px]">OK</DialogButton>
        <DialogButton className="w-[151px] h-[35px]">Close</DialogButton>
        <DialogButton className="w-[151px] h-[35px]">Help</DialogButton>
      </div>
    </div>
  </div>
)

const PolarizationDialog = () => (
  <div className="absolute left-[900px] top-[607px] w-[762px] h-[352px] border-[5px] border-[#ee1c24] bg-[#d8d8d8] shadow-[0_4px_18px_rgba(0,0,0,0.3)] pt-0.5 pr-px pb-0.5 font-['Noto_Sans',sans-serif] text-[17px] text-[#1c1c28]">
    <div role="dialog" className="h-full border border-[#666] bg-[#f0f0f0]">
      <DialogTitle className="pl-3 pr-4 text-black">Add Polarization</DialogTitle>
      <div className="flex justify-between pl-[18px] pr-[18px] pt-[19px]">
        <div>
          <label htmlFor="pol-type" className="block leading-6">Type:</label>
          <div className="mt-1.5 w-[521px] h-[33px] flex items-center bg-[#e1e1e1] border-2 border-[#b9b9b9] pl-0.5">
            <select id="pol-type" className="appearance-none w-[487px] h-[25px] leading-5 border border-dotted border-[#333] outline-none">
              <option>Horizontal</option>
            </select>
            <svg className="mx-auto w-3.5 h-2" viewBox="0 0 14 8"><path d="M1 1l6 6 6-6" fill="none" stroke="#666" strokeWidth="2" /></svg>
          </div>
          <label htmlFor="pol-amp" className="block mt-9 leading-6">Amplitude:</label>
          <input id="pol-amp" defaultValue="1.0" className="block mt-[5px] w-[239px] h-[38px] px-1.5 pb-1.5 bg-white border-2 border-[#999] outline-none" />
        </div>
        <div className="flex flex-col gap-2.5">
          <DialogButton primary className="w-[130px] h-[35px]">OK</DialogButton>
          <DialogButton className="w-[130px] h-[35px]">Cancel</DialogButton>
          <DialogButton className="w-[130px] h-[35px]">Help</DialogButton>
        </div>
      </div>
    </div>
    <div className="absolute left-[156px] top-[138px] font-bold text-[28px] leading-[56px] text-[#ee1c24] font-['Open_Sans','Noto_Sans_CJK_SC',sans-serif]">
      <p>13-7 默认参数</p>
      <p className="pl-2.5">极化方式以及振幅</p>
    </div>
  </div>
)

const App = () => {
  return (
    <div className="relative h-screen flex flex-col overflow-hidden bg-[#f0f0f0] font-['Open_Sans',sans-serif]">
      <Gradients />
      <TitleBar />
      <MenuTabs />
      <Ribbon />
      <div className="flex-1 min-h-0 flex">
        <NavigationTree />
        <Workspace />
      </div>
      <StatusBar />
      <ImeBar />

      {/* strip of the window lying behind the title bar */}
      <div className="absolute left-[1099px] top-0 flex h-0.5">
        <span className="w-[72px] bg-[#0078d7]" />
        <span className="w-[290px] bg-[#e6e6e6]" />
      </div>

      <div role="dialog" className="absolute left-[838px] top-[342px] w-[884px] h-[881px] bg-[#f0f0f0] border border-[#8a8a8a] shadow-[0_4px_16px_rgba(0,0,0,0.35)]">
        <DialogTitle>Integral Equation Solver Parameters</DialogTitle>
      </div>
      <RcsDialog />
      <PolarizationDialog />
    </div>
  )
}

export default App
